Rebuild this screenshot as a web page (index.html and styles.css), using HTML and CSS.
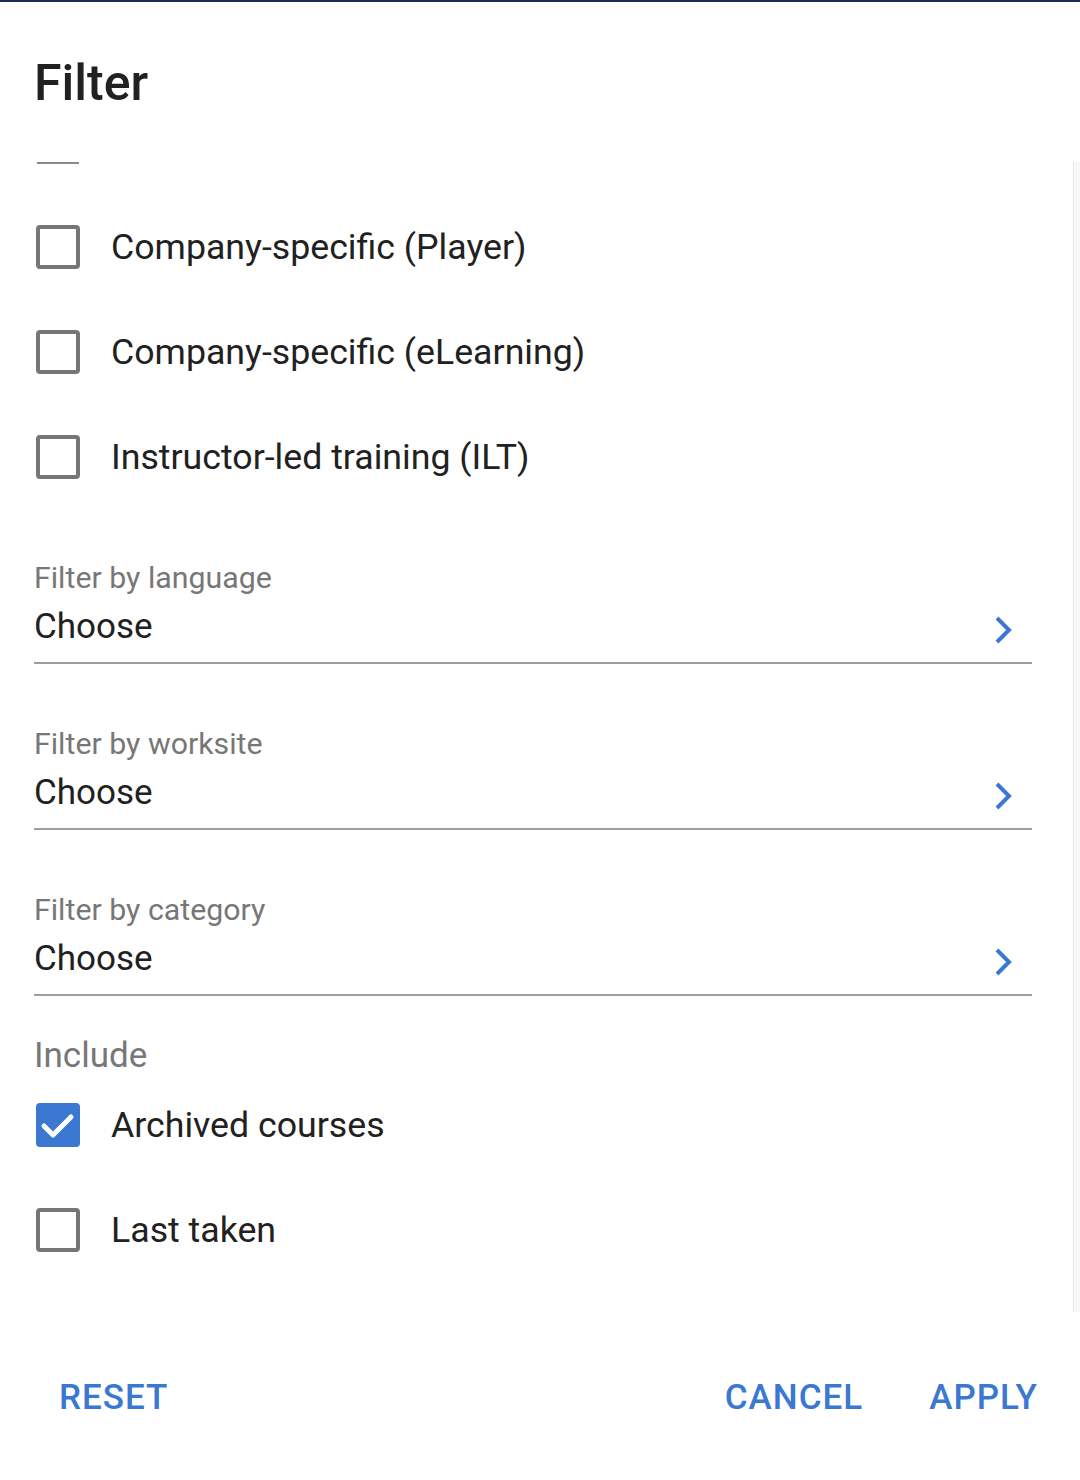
FILE: index.html
```html
<!DOCTYPE html>
<html>
<head>
<meta charset="utf-8">
<link rel="stylesheet" href="styles.css">
</head>
<body>
<div class="dialog">
  <h1 class="title">Filter</h1>
  <div class="scroller">
    <div class="content">
      <div class="stub"></div>
      <div class="group group-top">
        <label class="check-row"><span class="box"></span><span class="check-label">Company-specific (Player)</span></label>
        <label class="check-row"><span class="box"></span><span class="check-label">Company-specific (eLearning)</span></label>
        <label class="check-row"><span class="box"></span><span class="check-label">Instructor-led training (ILT)</span></label>
      </div>
      <div class="fields">
        <div class="field">
          <div class="field-label">Filter by language</div>
          <div class="field-input"><span>Choose</span>
            <svg class="chev" viewBox="0 0 20 32" width="20" height="32"><polyline points="3,3 15,15 3,27" fill="none" stroke="currentColor" stroke-width="4"/></svg>
          </div>
        </div>
        <div class="field">
          <div class="field-label">Filter by worksite</div>
          <div class="field-input"><span>Choose</span>
            <svg class="chev" viewBox="0 0 20 32" width="20" height="32"><polyline points="3,3 15,15 3,27" fill="none" stroke="currentColor" stroke-width="4"/></svg>
          </div>
        </div>
        <div class="field">
          <div class="field-label">Filter by category</div>
          <div class="field-input"><span>Choose</span>
            <svg class="chev" viewBox="0 0 20 32" width="20" height="32"><polyline points="3,3 15,15 3,27" fill="none" stroke="currentColor" stroke-width="4"/></svg>
          </div>
        </div>
      </div>
      <div class="section-label">Include</div>
      <div class="group group-include">
        <label class="check-row"><span class="box checked"><svg viewBox="0 0 44 44" width="44" height="44"><polyline points="8,23 17,32 35,14" fill="none" stroke="#fff" stroke-width="5" stroke-linecap="round" stroke-linejoin="round"/></svg></span><span class="check-label">Archived courses</span></label>
        <label class="check-row"><span class="box"></span><span class="check-label">Last taken</span></label>
      </div>
    </div>
    <div class="track"></div>
  </div>
  <div class="actions">
    <button class="btn">RESET</button>
    <div class="spacer"></div>
    <button class="btn">CANCEL</button>
    <button class="btn btn-last">APPLY</button>
  </div>
</div>
</body>
</html>
```

FILE: styles.css
```css
html, body {
  margin: 0;
  padding: 0;
  background: #ffffff;
}
body {
  font-family: Roboto, "Liberation Sans", sans-serif;
  color: #212121;
  width: 1080px;
  height: 1480px;
  overflow: hidden;
}
.dialog {
  border-top: 2px solid #1b2d50;
  height: 1478px;
  display: flex;
  flex-direction: column;
}
.title {
  margin: 0;
  padding: 51px 0 0 34px;
  font-size: 50px;
  font-weight: 500;
  line-height: 60px;
  height: 160px;
  box-sizing: border-box;
  color: #212121;
}
.scroller {
  height: 1150px;
  flex: none;
  display: flex;
  overflow: hidden;
}
.content {
  flex: 1;
  padding: 0 41px 0 34px;
}
.track {
  width: 7px;
  flex: none;
  background: #f8f8f8;
  border-left: 1px solid #e6e6e6;
  box-sizing: border-box;
}
.stub {
  width: 42px;
  height: 2px;
  margin-left: 3px;
  background: #8a8a8a;
}
.group {
  display: flex;
  flex-direction: column;
}
.group-top {
  margin-top: 30px;
}
.check-row {
  display: flex;
  align-items: center;
  height: 105px;
  padding-left: 2px;
}
.box {
  width: 44px;
  height: 44px;
  box-sizing: border-box;
  border: 4px solid #767676;
  border-radius: 4px;
  flex: none;
  position: relative;
}
.box.checked {
  background: #3a78d1;
  border-color: #3a78d1;
}
.box.checked svg {
  position: absolute;
  left: -4px;
  top: -4px;
}
.check-label {
  margin-left: 31px;
  font-size: 35.7px;
  line-height: 44px;
  color: #212121;
}
.fields {
  margin-top: 49px;
  display: flex;
  flex-direction: column;
  gap: 60px;
}
.field-label {
  font-size: 30.3px;
  line-height: 40px;
  margin-bottom: 3px;
  color: #777777;
}
.field-input {
  display: flex;
  align-items: center;
  justify-content: space-between;
  height: 50px;
  padding-bottom: 11px;
  border-bottom: 2px solid #9e9e9e;
  font-size: 35px;
  color: #212121;
}
.chev {
  color: #3a78d1;
  margin-right: 18px;
  margin-top: 10px;
}
.section-label {
  margin-top: 40px;
  font-size: 35px;
  line-height: 40px;
  color: #777777;
}
.group-include {
  margin-top: -4px;
}
.actions {
  flex: 1;
  display: flex;
  align-items: flex-start;
  padding: 66px 42px 0 33px;
}
.spacer {
  flex: 1;
}
.btn {
  background: none;
  border: none;
  padding: 0 26px;
  margin: 0;
  font-family: Roboto, "Liberation Sans", sans-serif;
  font-size: 35px;
  font-weight: 500;
  letter-spacing: 1px;
  line-height: 40px;
  color: #3a78d1;
}
.btn-last {
  padding-right: 0;
  margin-left: 14px;
}
```
